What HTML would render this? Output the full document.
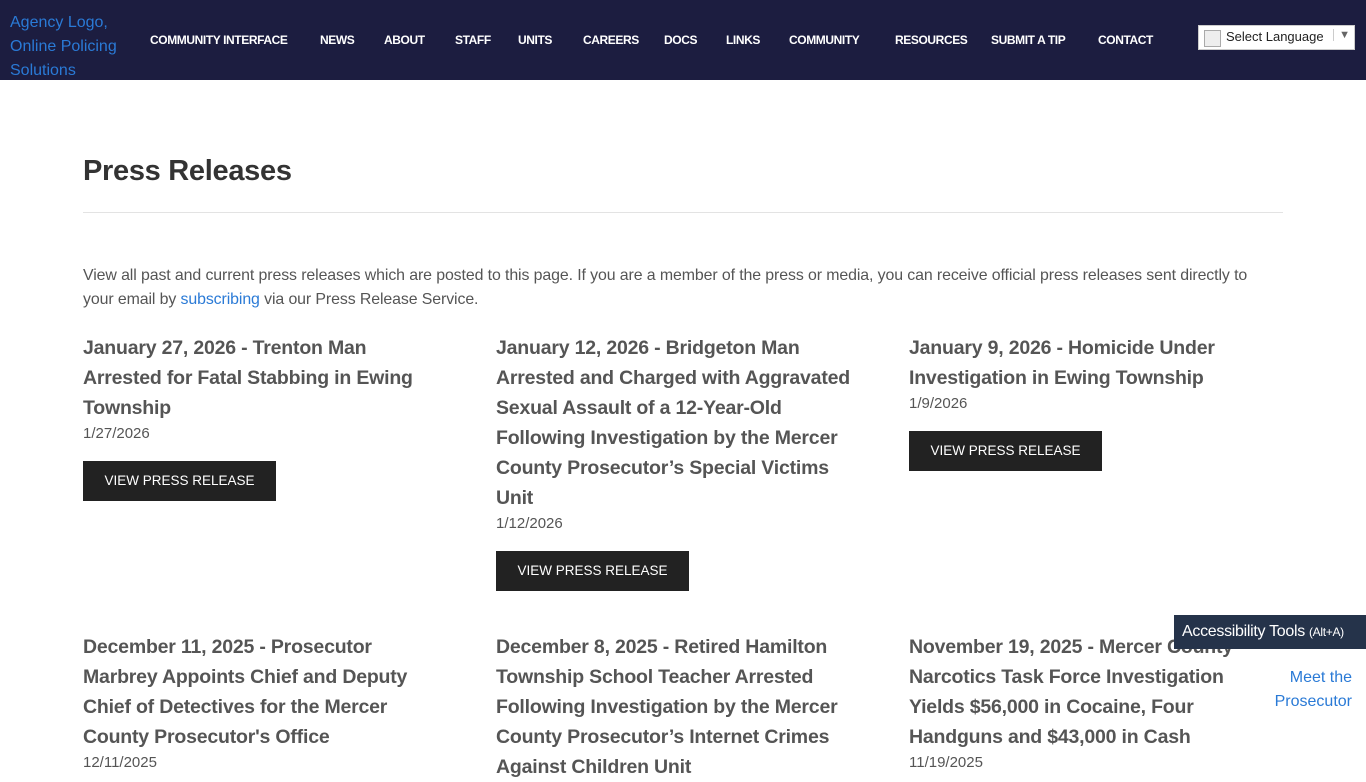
<!DOCTYPE html>
<html><head><meta charset="utf-8"><style>
*{margin:0;padding:0;box-sizing:border-box}
body{width:1366px;height:768px;overflow:hidden;background:#fff;font-family:"Liberation Sans",sans-serif;color:#555;position:relative}
.hdr{height:80px;background:#1c1d40;position:relative}
.logo{position:absolute;left:10px;top:11px;width:125px;color:#2a7ad6;font-size:16px;line-height:24px}
.nav{position:absolute;top:33px;left:150px;font-size:12px;font-weight:bold;color:#fff;white-space:nowrap}
.nav span{position:absolute;letter-spacing:-0.4px}
.lang{position:absolute;left:1198px;top:25px;width:157px;height:25px;background:#fff;border:1px solid #ccc;font-size:13px;color:#222;padding:3px 0 0 27px}
.lang:before{content:"";position:absolute;left:5px;top:4px;width:15px;height:15px;border:1px solid #aaa;background:#eee}
.lang i{position:absolute;right:4px;top:3px;font-style:normal;color:#666;font-size:11px;border-left:1px solid #ccc;padding-left:5px}
h1{position:absolute;left:83px;top:155px;font-size:29px;color:#333;font-weight:bold;letter-spacing:-0.3px}
.hr{position:absolute;left:83px;top:212px;width:1200px;border-top:1px solid #e3e3e3}
.intro{position:absolute;left:83px;top:264px;width:1200px;font-size:15.9px;line-height:24px;color:#555;letter-spacing:-0.1px;white-space:nowrap}
a{color:#2a7ad6;text-decoration:none}
.item{position:absolute;width:383px}
.item h2{font-size:19.5px;line-height:30px;font-weight:bold;color:#555;white-space:nowrap;letter-spacing:-0.2px;padding-top:1px}
.item .d{font-size:15px;line-height:22px;color:#555}
.btn{display:inline-block;margin-top:16px;width:193px;height:40px;background:#222;color:#fff;font-size:13.5px;text-align:center;line-height:40px}
.acc{position:absolute;left:1174px;top:615px;width:192px;height:34px;background:#25334a;color:#fff;font-size:16px;padding:8px 0 0 8px;letter-spacing:-0.3px}
.acc small{font-size:12px;margin-left:4px}
.meet{position:absolute;left:1262px;top:666px;width:90px;text-align:right;font-size:16px;line-height:24px;color:#2a7ad6;background:#fff}
</style></head><body>
<div class="hdr">
<div class="logo">Agency Logo, Online Policing Solutions</div>
<div class="nav">
<span style="left:0">COMMUNITY INTERFACE</span><span style="left:170px">NEWS</span><span style="left:234px">ABOUT</span><span style="left:305px">STAFF</span><span style="left:368px">UNITS</span><span style="left:433px">CAREERS</span><span style="left:514px">DOCS</span><span style="left:576px">LINKS</span><span style="left:639px">COMMUNITY</span><span style="left:745px">RESOURCES</span><span style="left:841px">SUBMIT A TIP</span><span style="left:948px">CONTACT</span>
</div>
<div class="lang">Select Language<i>▼</i></div>
</div>
<h1>Press Releases</h1>
<div class="hr"></div>
<div class="intro">View all past and current press releases which are posted to this page. If you are a member of the press or media, you can receive official press releases sent directly to<br>your email by <a>subscribing</a> via our Press Release Service.</div>
<div class="item" style="left:83px;top:332px"><h2>January 27, 2026 - Trenton Man<br>Arrested for Fatal Stabbing in Ewing<br>Township</h2><div class="d">1/27/2026</div><div class="btn">VIEW PRESS RELEASE</div></div>
<div class="item" style="left:496px;top:332px"><h2>January 12, 2026 - Bridgeton Man<br>Arrested and Charged with Aggravated<br>Sexual Assault of a 12-Year-Old<br>Following Investigation by the Mercer<br>County Prosecutor’s Special Victims<br>Unit</h2><div class="d">1/12/2026</div><div class="btn">VIEW PRESS RELEASE</div></div>
<div class="item" style="left:909px;top:332px"><h2>January 9, 2026 - Homicide Under<br>Investigation in Ewing Township</h2><div class="d">1/9/2026</div><div class="btn">VIEW PRESS RELEASE</div></div>
<div class="item" style="left:83px;top:631px"><h2>December 11, 2025 - Prosecutor<br>Marbrey Appoints Chief and Deputy<br>Chief of Detectives for the Mercer<br>County Prosecutor's Office</h2><div class="d">12/11/2025</div></div>
<div class="item" style="left:496px;top:631px"><h2>December 8, 2025 - Retired Hamilton<br>Township School Teacher Arrested<br>Following Investigation by the Mercer<br>County Prosecutor’s Internet Crimes<br>Against Children Unit</h2></div>
<div class="item" style="left:909px;top:631px"><h2>November 19, 2025 - Mercer County<br>Narcotics Task Force Investigation<br>Yields $56,000 in Cocaine, Four<br>Handguns and $43,000 in Cash</h2><div class="d">11/19/2025</div></div>
<div class="acc">Accessibility Tools<small>(Alt+A)</small></div>
<div class="meet">Meet the Prosecutor</div>
</body></html>
